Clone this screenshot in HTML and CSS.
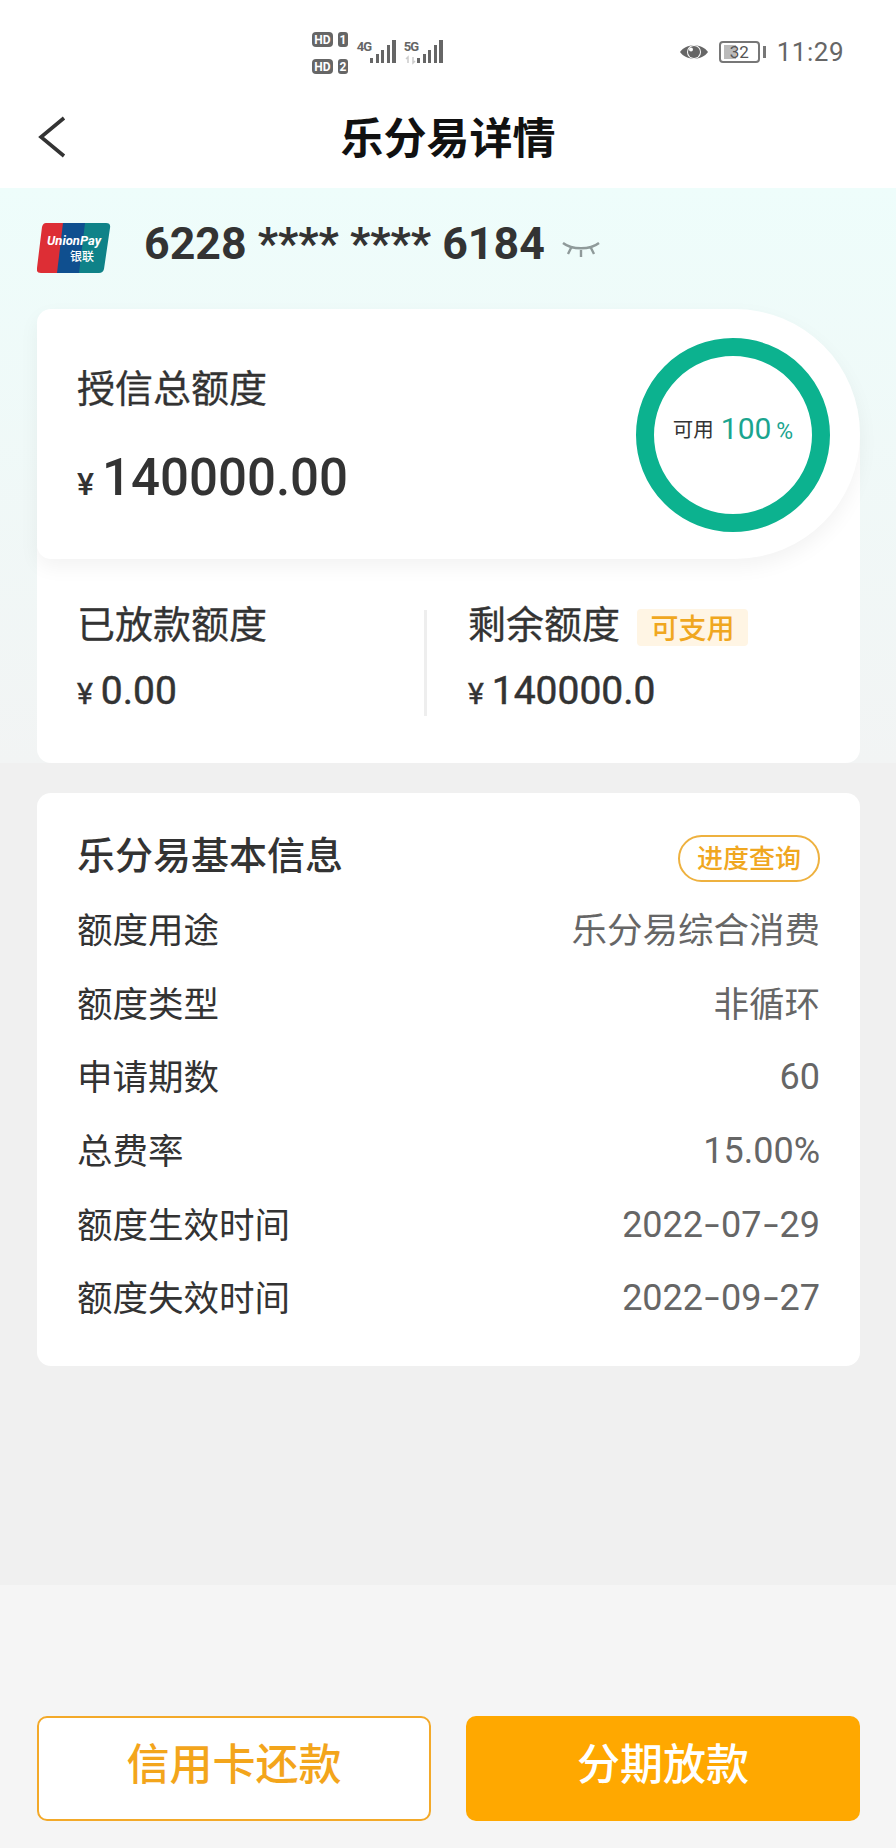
FILE: index.html
```html
<!DOCTYPE html>
<html lang="zh-CN">
<head>
  <meta charset="UTF-8" />
  <meta name="viewport" content="width=device-width, initial-scale=1" />
  <title>乐分易详情</title>
  <link rel="stylesheet" href="styles.css">
</head>
<body>

  <div class="status-bar">
    <div class="signal">
      <svg width="134" height="46" viewBox="0 0 134 46">
        <rect x="2" y="2" width="21" height="15" rx="4" fill="#666" />
        <rect x="28" y="2" width="10" height="15" rx="3" fill="#666" />
        <rect x="2" y="29" width="21" height="15" rx="4" fill="#666" />
        <rect x="28" y="29" width="10" height="15" rx="3" fill="#666" />
        <text x="12.5" y="14" class="sig-in">HD</text>
        <text x="33" y="14" class="sig-in">1</text>
        <text x="12.5" y="41" class="sig-in">HD</text>
        <text x="33" y="41" class="sig-in">2</text>
        <text x="54" y="21" class="sig-net">4G</text>
        <text x="101" y="21" class="sig-net">5G</text>
        <g fill="#666">
          <rect x="60" y="28" width="3" height="5" />
          <rect x="66" y="24" width="3" height="9" />
          <rect x="71" y="20" width="3" height="13" />
          <rect x="77" y="15" width="3" height="18" />
          <rect x="82" y="10" width="4" height="23" />
          <rect x="107" y="28" width="3" height="5" />
          <rect x="113" y="24" width="3" height="9" />
          <rect x="118" y="20" width="3" height="13" />
          <rect x="124" y="15" width="3" height="18" />
          <rect x="129" y="10" width="4" height="23" />
        </g>
        <path d="M98 33 V27 L96 29 M103 27 V33 L105 31" fill="none" stroke="#ccc" stroke-width="1.5" />
      </svg>
    </div>
    <div class="status-right">
      <svg width="30" height="20" viewBox="0 0 30 20">
        <path d="M1 10 C7 1 23 1 29 10 C23 19 7 19 1 10Z" fill="#666" />
        <circle cx="15" cy="10" r="7" fill="#fff" />
        <circle cx="15" cy="10" r="6" fill="#666" />
        <circle cx="12" cy="7.5" r="2" fill="#fff" />
      </svg>
      <div class="battery">
        <div class="battery-body"><span class="battery-fill"></span><span class="battery-num">32</span></div>
        <span class="battery-tip"></span>
      </div>
      <span class="clock">11:29</span>
    </div>
  </div>

  <div class="nav-bar">
    <svg class="back" width="28" height="42" viewBox="0 0 28 42">
      <path d="M26 2 L3 21 L26 40" fill="none" stroke="#333" stroke-width="3.6" />
    </svg>
    <h1>乐分易详情</h1>
  </div>

  <div class="top-area">
    <div class="card-no">
      <svg class="unionpay" width="74" height="50" viewBox="0 0 74 50">
        <path d="M9 0 H28 L22 50 H4 Q-1 50 0 45 L5 4 Q6 0 9 0Z" fill="#dd2e35" />
        <path d="M26 0 H50 L44 50 H20Z" fill="#0f4f8f" />
        <path d="M48 0 H69 Q74 0 73 5 L67 46 Q66 50 62 50 H42Z" fill="#0f8288" />
        <text x="37" y="22" class="up-en">UnionPay</text>
        <text x="45" y="38" class="up-cn">银联</text>
      </svg>
      <span class="card-digits">6228 **** **** 6184</span>
      <svg class="eye-closed" width="38" height="18" viewBox="0 0 38 18">
        <path d="M1 3 C10 10 28 10 37 3 M9 8 L6 14 M19 10 V17 M29 8 L32 14" fill="none" stroke="#8f9a9a" stroke-width="2.4" />
      </svg>
    </div>

    <div class="quota-panel">
      <div class="quota-main">
        <div class="quota-left">
          <div class="quota-title">授信总额度</div>
          <div class="quota-total"><span class="yen">¥</span>140000.00</div>
        </div>
        <div class="ring">
          <span class="ring-label">可用</span>
          <span class="ring-num">100</span>
          <span class="ring-pct">%</span>
        </div>
      </div>
      <div class="quota-sub">
        <div class="sub-col">
          <div class="sub-title">已放款额度</div>
          <div class="sub-amount"><span class="yen-small">¥</span>0.00</div>
        </div>
        <div class="sub-line"></div>
        <div class="sub-col sub-right">
          <div class="sub-title">剩余额度<span class="tag">可支用</span></div>
          <div class="sub-amount"><span class="yen-small">¥</span>140000.0</div>
        </div>
      </div>
    </div>
  </div>

  <div class="middle">
    <div class="info-card">
      <div class="info-head">
        <h2>乐分易基本信息</h2>
        <span class="progress-btn">进度查询</span>
      </div>
      <div class="info-row"><span>额度用途</span><span class="val">乐分易综合消费</span></div>
      <div class="info-row"><span>额度类型</span><span class="val">非循环</span></div>
      <div class="info-row"><span>申请期数</span><span class="val num">60</span></div>
      <div class="info-row"><span>总费率</span><span class="val num">15.00%</span></div>
      <div class="info-row"><span>额度生效时间</span><span class="val num">2022<span class="dash">-</span>07<span class="dash">-</span>29</span></div>
      <div class="info-row"><span>额度失效时间</span><span class="val num">2022<span class="dash">-</span>09<span class="dash">-</span>27</span></div>
    </div>
  </div>

  <div class="footer">
    <button class="btn btn-line">信用卡还款</button>
    <button class="btn btn-fill">分期放款</button>
  </div>

</body>
</html>
```

FILE: styles.css
```css
* {
  box-sizing: border-box;
}
body {
  margin: 0;
  width: 896px;
  height: 1848px;
  overflow: hidden;
  display: flex;
  flex-direction: column;
  background: #f5f5f5;
  color: #333;
  font-family: Roboto, "Noto Sans CJK SC", sans-serif;
}

/* status bar */
.status-bar {
  height: 90px;
  flex: none;
  background: #fff;
  display: flex;
  align-items: flex-start;
  padding: 30px 52px 0 310px;
  justify-content: space-between;
}
.signal svg {
  display: block;
}
.sig-in {
  font: 700 12px Roboto, sans-serif;
  fill: #fff;
  text-anchor: middle;
}
.sig-net {
  font: 700 13px Roboto, sans-serif;
  letter-spacing: -0.8px;
  fill: #666;
  text-anchor: middle;
}
.status-right {
  display: flex;
  align-items: center;
  margin-top: 4px;
  height: 36px;
}
.battery {
  display: flex;
  align-items: center;
  margin-left: 10px;
}
.battery-body {
  width: 41px;
  height: 22px;
  border: 2px solid #777;
  border-radius: 4px;
  position: relative;
  display: flex;
  align-items: center;
  justify-content: center;
}
.battery-fill {
  position: absolute;
  left: 3px;
  top: 2px;
  bottom: 2px;
  width: 12px;
  background: #bbb;
}
.battery-num {
  position: relative;
  font-size: 17px;
  color: #555;
}
.battery-tip {
  width: 3px;
  height: 12px;
  margin-left: 3px;
  background: #777;
}
.clock {
  margin-left: 11px;
  font-size: 26px;
  color: #666;
  letter-spacing: 0.5px;
}

/* nav */
.nav-bar {
  height: 98px;
  flex: none;
  background: #fff;
  position: relative;
  display: flex;
  align-items: center;
  justify-content: center;
}
.back {
  position: absolute;
  left: 38px;
  top: 26px;
}
h1 {
  margin: 0 0 8px;
  font-size: 43px;
  font-weight: 700;
  color: #111;
  font-family: "Noto Sans CJK SC", sans-serif;
}

/* top area */
.top-area {
  flex: none;
  height: 575px;
  padding: 0 36px 0 37px;
  background: linear-gradient(180deg, #eefdfb 0%, #f2f4f4 100%);
}
.card-no {
  height: 121px;
  display: flex;
  align-items: center;
  padding-bottom: 9px;
}
.unionpay {
  margin-top: 7px;
}
.up-en {
  font: italic 700 13px Roboto, sans-serif;
  fill: #fff;
  text-anchor: middle;
}
.up-cn {
  font: 500 12px "Noto Sans CJK SC", sans-serif;
  fill: #fff;
  text-anchor: middle;
}
.card-digits {
  margin-left: 33px;
  font-size: 44.7px;
  font-weight: 700;
  color: #333;
  white-space: pre;
}
.eye-closed {
  margin-left: 17px;
  margin-top: 9px;
}
.quota-panel {
  background: linear-gradient(180deg, transparent 124px, #fff 124px);
  border-radius: 14px;
  height: 454px;
}
.quota-main {
  height: 250px;
  background: #fff;
  border-radius: 14px 125px 125px 14px;
  box-shadow: 0 8px 20px rgba(0, 0, 0, 0.05);
  display: flex;
  justify-content: space-between;
  align-items: center;
  padding: 0 30px 0 40px;
}
.quota-left {
  padding-top: 6px;
}
.quota-title {
  font-size: 38px;
  font-family: "Noto Sans CJK SC", sans-serif;
  color: #333;
  -webkit-text-stroke: 0.3px #333;
}
.quota-total {
  margin-top: 33px;
  font-size: 51px;
  font-weight: 500;
  line-height: 64px;
  color: #333;
}
.yen {
  font-size: 32px;
  margin-right: 8px;
}
.ring {
  width: 194px;
  height: 194px;
  margin-top: 2px;
  border: 18px solid #0cb28f;
  border-radius: 50%;
  display: flex;
  align-items: center;
  justify-content: center;
  padding-bottom: 14px;
  white-space: nowrap;
}
.ring-label {
  font-size: 20.5px;
  color: #333;
  font-family: "Noto Sans CJK SC", sans-serif;
}
.ring-num {
  margin-left: 7px;
  font-size: 30px;
  color: #1aa58f;
}
.ring-pct {
  margin-left: 5px;
  margin-top: 6px;
  font-size: 23px;
  color: #1aa58f;
}
.quota-sub {
  display: flex;
  padding: 39px 0 0 40px;
}
.sub-col {
  width: 347px;
}
.sub-right {
  width: auto;
  padding-left: 41px;
}
.sub-title {
  font-size: 38px;
  line-height: 48px;
  color: #333;
  font-family: "Noto Sans CJK SC", sans-serif;
  display: flex;
  align-items: center;
  -webkit-text-stroke: 0.3px #333;
}
.tag {
  margin-left: 17px;
  margin-top: 11px;
  width: 111px;
  height: 37px;
  line-height: 37px;
  text-align: center;
  font-size: 28px;
  font-weight: 500;
  color: #f0a71f;
  background: #fff5e4;
  border-radius: 4px;
  -webkit-text-stroke: 0;
}
.sub-amount {
  margin-top: 23px;
  font-size: 39px;
  font-weight: 400;
  line-height: 44px;
  -webkit-text-stroke: 0.5px #333;
}
.yen-small {
  font-size: 30px;
  margin-right: 8px;
}
.sub-line {
  width: 3px;
  height: 106px;
  margin-top: 12px;
  background: #eee;
}

/* info */
.middle {
  flex: none;
  height: 822px;
  background: #f0f0f0;
  padding: 30px 36px 0 37px;
}
.info-card {
  background: #fff;
  border-radius: 14px;
  height: 573px;
  padding: 32px 40px 0 40px;
}
.info-head {
  display: flex;
  justify-content: space-between;
  align-items: center;
  height: 60px;
  margin-bottom: 6px;
}
h2 {
  margin: 0 0 6px;
  font-size: 38px;
  font-weight: 500;
  color: #333;
  font-family: "Noto Sans CJK SC", sans-serif;
}
.progress-btn {
  width: 142px;
  height: 47px;
  margin-top: 7px;
  line-height: 40px;
  text-align: center;
  border: 2px solid #eeb13f;
  border-radius: 24px;
  font-size: 26px;
  font-weight: 500;
  color: #f0a71f;
  font-family: "Noto Sans CJK SC", sans-serif;
}
.info-row {
  display: flex;
  justify-content: space-between;
  align-items: center;
  height: 73.6px;
  font-size: 35.5px;
  font-family: "Noto Sans CJK SC", sans-serif;
  color: #333;
}
.val {
  color: #666;
  font-family: Roboto, "Noto Sans CJK SC", sans-serif;
}
.num {
  padding-top: 5px;
  font-size: 36px;
}
.dash {
  display: inline-block;
  width: 18px;
  text-align: center;
  transform: scaleX(1.5);
}

/* footer */
.footer {
  flex: none;
  display: flex;
  gap: 35px;
  padding: 131px 36px 0 37px;
}
.btn {
  width: 394px;
  height: 105px;
  padding: 0 0 15px;
  border-radius: 10px;
  font-size: 43px;
  font-weight: 500;
  font-family: "Noto Sans CJK SC", sans-serif;
  cursor: pointer;
}
.btn-line {
  background: #fff;
  border: 2px solid #f3a929;
  color: #f3a51b;
}
.btn-fill {
  background: #ffa800;
  border: none;
  color: #fff;
}
```
